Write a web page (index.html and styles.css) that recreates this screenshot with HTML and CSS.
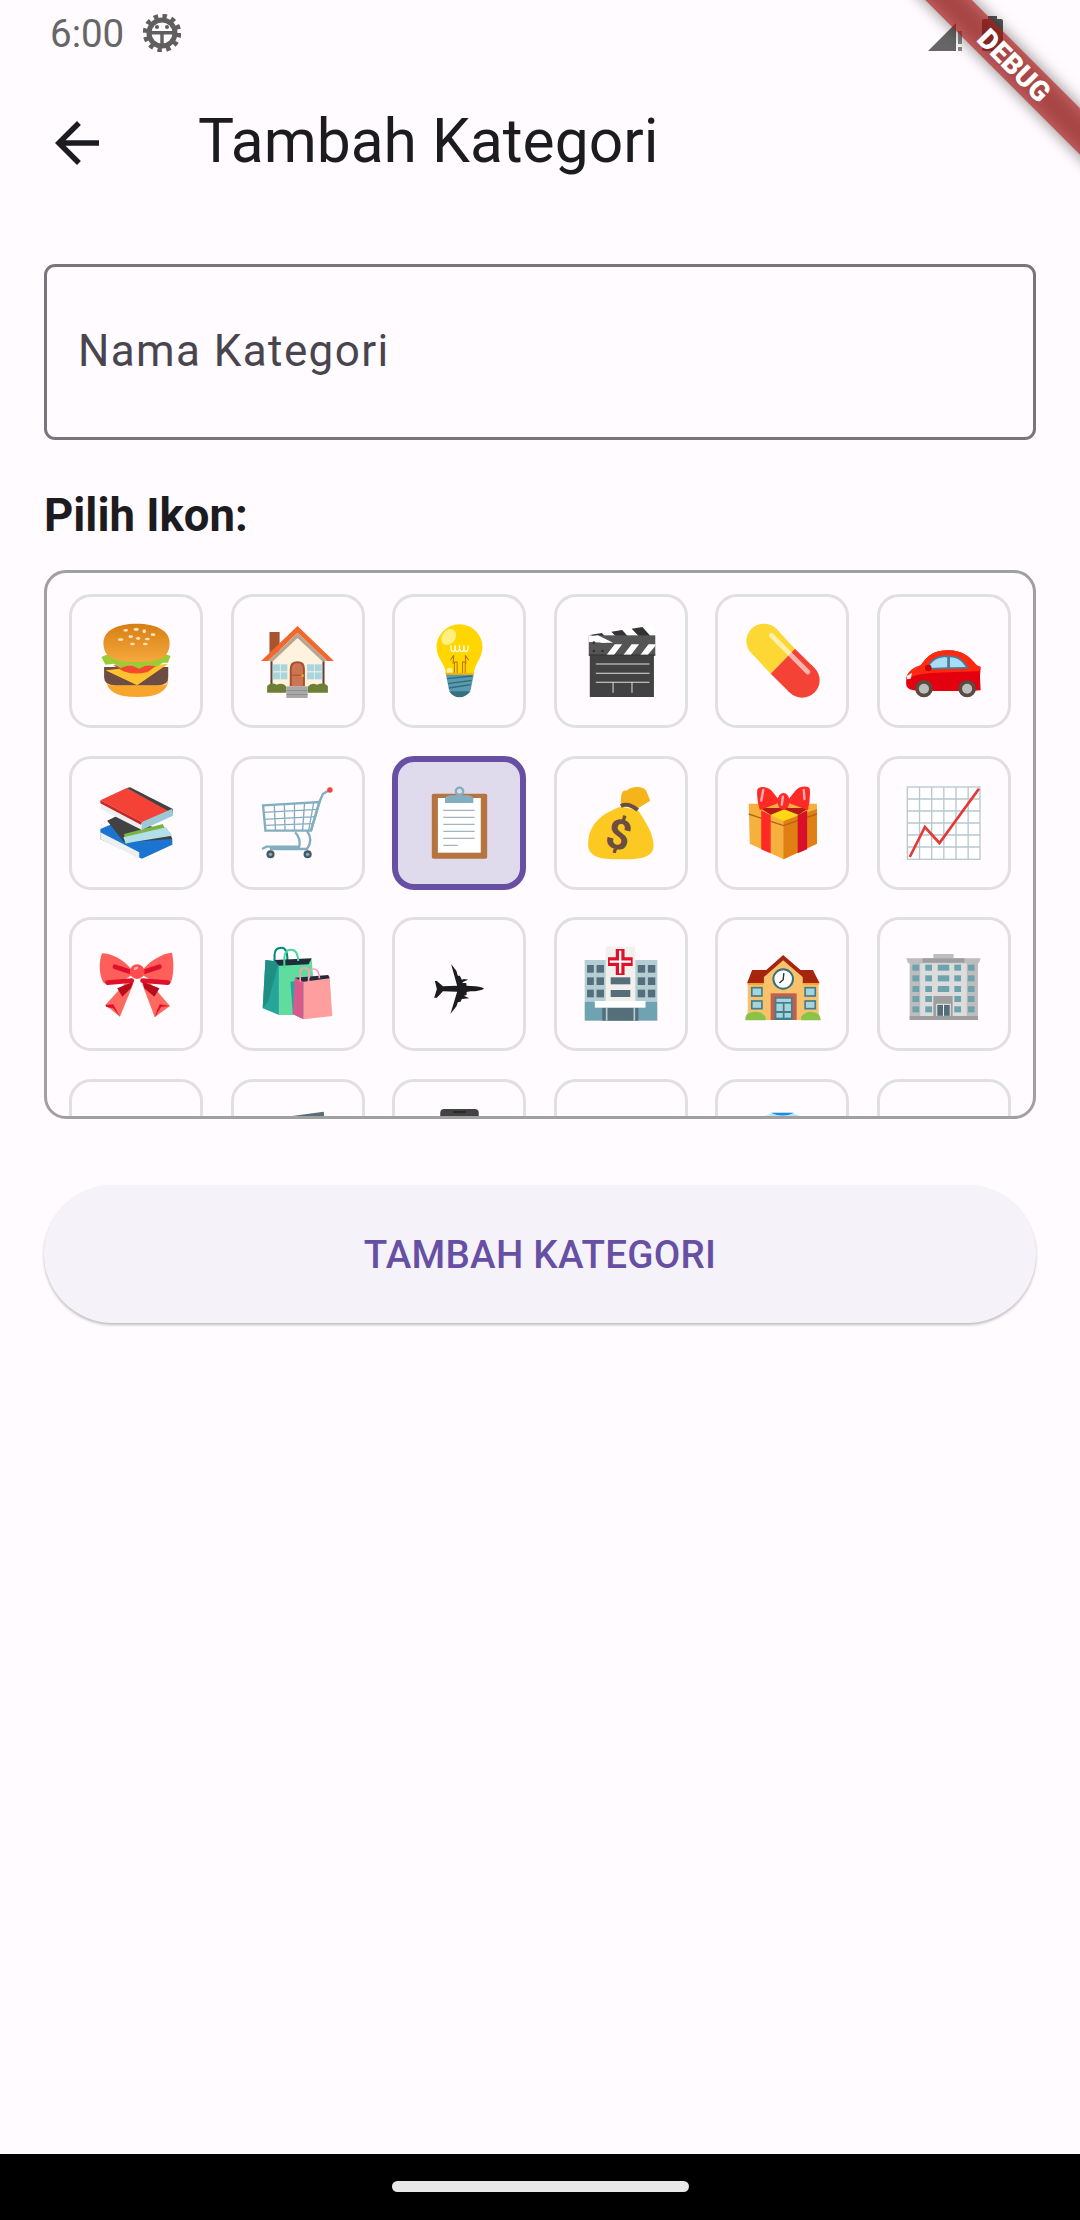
FILE: index.html
```html
<!DOCTYPE html>
<html lang="id">
<head>
<meta charset="UTF-8" />
<title>Tambah Kategori</title>
<link rel="stylesheet" href="styles.css">
</head>
<body>

<div class="statusbar">
	<span class="clock">6:00</span>
	<svg class="gear" viewBox="0 0 38 38">
		<circle cx="19" cy="19" r="17" fill="none" stroke="#5f5f5f" stroke-width="4.500" stroke-dasharray="4.450 4.450"/>
		<circle cx="19" cy="19" r="15.500" fill="#5f5f5f"/>
		<circle cx="19" cy="19" r="10.500" fill="#fffbfe"/>
		<rect x="8" y="17" width="22" height="3.500" fill="#5f5f5f"/>
		<rect x="17.300" y="18" width="3.400" height="13" fill="#5f5f5f"/>
		<circle cx="14" cy="13" r="2" fill="#5f5f5f"/>
		<circle cx="24" cy="13" r="2" fill="#5f5f5f"/>
	</svg>
	<span class="statusgap"></span>
	<svg class="signal" viewBox="0 0 34 35">
		<path d="M0 35 L28 7 V35Z" fill="#666"/>
		<path d="M30 15h4v13h-4zM30 31h4v4h-4z" fill="#888"/>
	</svg>
	<svg class="battery" viewBox="0 0 21 35">
		<path d="M6 3 V0 H15 V3 H19 Q21 3 21 5 V33 Q21 35 19 35 H2 Q0 35 0 33 V5 Q0 3 2 3Z" fill="#555"/>
	</svg>
</div>

<div class="appbar">
	<span class="backbtn">
		<svg viewBox="0 0 24 24" width="66" height="66"><path fill="#1c1b1f" d="M20 11H7.830l5.590-5.590L12 4l-8 8 8 8 1.410-1.410L7.830 13H20v-2z"/></svg>
	</span>
	<h1>Tambah Kategori</h1>
</div>

<div class="content">
	<div class="namefield">Nama Kategori</div>

	<h2>Pilih Ikon:</h2>

	<div class="iconpanel">
		<div class="icongrid">

			<!-- burger -->
			<div class="tile"><svg class="emoji" viewBox="0 0 234 234">
				<defs><linearGradient id="bun" x1="0" y1="0" x2="0" y2="1"><stop offset="0" stop-color="#d67e14"/><stop offset="1" stop-color="#f6a93c"/></linearGradient></defs>
				<path d="M27 170 Q27 225 119 225 Q211 225 211 170Z" fill="#f8a52b"/>
				<rect x="30" y="168" width="178" height="22" rx="10" fill="#ffd08a"/>
				<path d="M21 135 H211 V165 Q211 190 180 190 H55 Q21 190 21 165Z" fill="#6d4c41"/>
				<path d="M25 145 L119 190 L211 125Z" fill="#fdc22e"/>
				<path d="M48 130 H178 L150 150 Q110 160 78 148Z" fill="#f44a2c"/>
				<path d="M13 105 L35 95 H200 L218 102 L210 122 L195 122 L178 134 L150 128 L125 140 L98 128 L70 138 L50 125 L25 128Z" fill="#9ccc35"/>
				<path d="M19 62 C19 25 60 5 117 5 C175 5 215 25 215 62 C215 105 190 120 117 120 C45 120 19 105 19 62Z" fill="url(#bun)"/>
				<g fill="#fbe3bd"><ellipse cx="85" cy="25" rx="7" ry="4"/><ellipse cx="116" cy="22" rx="8" ry="5"/><ellipse cx="140" cy="28" rx="5" ry="6"/><ellipse cx="166" cy="38" rx="7" ry="4"/><ellipse cx="70" cy="53" rx="8" ry="4"/><ellipse cx="100" cy="44" rx="7" ry="4"/><ellipse cx="122" cy="49" rx="6" ry="5"/><ellipse cx="149" cy="51" rx="7" ry="4"/><ellipse cx="105" cy="66" rx="7" ry="4"/><ellipse cx="143" cy="66" rx="7" ry="4"/></g>
			</svg></div>

			<!-- rumah -->
			<div class="tile"><svg class="emoji" viewBox="0 0 234 234">
				<rect x="34" y="30" width="30" height="65" fill="#a9532f"/>
				<path d="M37 112 L117 40 L197 112 V200 H37Z" fill="#fff3e0"/>
				<path d="M37 118 H43 V200 H37ZM191 118 H197 V200 H191Z" fill="#5d4037"/>
				<path d="M9 117 L117 12 L225 117 H205 L117 32 L30 117Z" fill="#f4672c"/>
				<path d="M30 117 L117 32 L205 117 H190 L117 48 L45 117Z" fill="#b8a68e"/>
				<g fill="#a8d5de"><rect x="44" y="127" width="21" height="21"/><rect x="67" y="127" width="20" height="21"/><rect x="44" y="151" width="21" height="21"/><rect x="67" y="151" width="20" height="21"/><rect x="145" y="127" width="21" height="21"/><rect x="168" y="127" width="21" height="21"/><rect x="145" y="151" width="21" height="21"/><rect x="168" y="151" width="21" height="21"/></g>
				<path d="M94 193 V140 Q94 118 117 118 Q139 118 139 140 V193Z" fill="#a6502e"/>
				<path d="M100 193 V141 Q100 124 117 124 Q133 124 133 141 V193Z" fill="#cc7552"/>
				<rect x="100" y="158" width="33" height="3" fill="#a6502e"/>
				<circle cx="132" cy="161" r="4" fill="#f9a825"/>
				<path d="M27 212 V192 Q40 180 55 188 Q75 180 84 195 V212Z M147 212 V195 Q158 180 175 188 Q195 180 207 192 V212Z" fill="#6d7f35"/>
				<rect x="84" y="193" width="63" height="35" fill="#a8a8a8"/>
				<path d="M84 204h63v3H84zM84 216h63v3H84z" fill="#8e8e8e"/>
			</svg></div>

			<!-- lampu -->
			<div class="tile"><svg class="emoji" viewBox="0 0 234 234">
				<path d="M49 75 A68 68 0 0 1 185 75 C185 110 160 125 159 158 H77 C76 125 49 110 49 75Z" fill="#ffd600"/>
				<ellipse cx="85" cy="45" rx="20" ry="26" transform="rotate(35 85 45)" fill="#ffee80"/>
				<circle cx="88" cy="146" r="9" fill="#fff3a0"/>
				<path d="M98 125 L100 100 M100 100 L90 115 M136 125 L134 100 M134 100 L144 115 M102 155 V120 H110 V155 M126 155 V120 H134 V155" fill="none" stroke="#b8730a" stroke-width="3"/>
				<path d="M92 70 C88 95 108 95 104 70 C100 95 120 95 117 70 C114 95 134 95 130 70 C126 95 146 95 142 70" fill="none" stroke="#fff" stroke-width="3.500"/>
				<path d="M75 152 H160 L156 165 H80Z" fill="#ffb300"/>
				<path d="M77 158 H159 L150 205 Q117 235 86 205Z" fill="#5a9ab0"/>
				<path d="M80 170 L155 162 M83 185 L153 175 M86 198 L150 188" stroke="#2f6a7c" stroke-width="4"/>
				<path d="M86 208 H150 Q135 226 117 226 Q98 226 86 208Z" fill="#37707f"/>
			</svg></div>

			<!-- clapper -->
			<div class="tile"><svg class="emoji" viewBox="0 0 234 234">
				<path d="M18 40 L213 10 L218 42 L22 72Z" fill="#fff"/>
				<path d="M30 38 L62 33 L85 60 L55 65Z M90 29 L122 24 L145 50 L114 55Z M150 20 L182 15 L205 41 L174 46Z" fill="#333"/>
				<rect x="23" y="40" width="197" height="60" fill="#555"/>
				<path d="M23 40 L60 48 L75 62 L23 60Z" fill="#fff"/>
				<path d="M50 40 L95 62 H60 L30 42Z" fill="#fff"/>
				<path d="M75 100 L100 67 H122 L97 100ZM125 100 L150 67 H172 L147 100ZM175 100 L200 67 H220 V72 L197 100Z" fill="#fff"/>
				<g fill="#333"><circle cx="38" cy="62" r="4"/><circle cx="38" cy="87" r="4"/><circle cx="64" cy="87" r="4"/></g>
				<rect x="26" y="100" width="190" height="125" fill="#424242"/>
				<rect x="23" y="98" width="197" height="3" fill="#222"/>
				<path d="M44 126 H203 M44 154 H203 M44 181 H203 M95 181 V212 M151 181 V212" stroke="#ddd" stroke-width="3" fill="none"/>
			</svg></div>

			<!-- pil -->
			<div class="tile"><svg class="emoji" viewBox="0 0 234 234">
				<circle cx="62" cy="57" r="52" fill="#fdd835"/>
				<path d="M99.500 21 L24.500 93 L82 155 L154 80Z" fill="#fdd835"/>
				<circle cx="175" cy="175" r="52" fill="#f44336"/>
				<path d="M154 80 L82 155 L137.500 211 L212.500 139Z" fill="#f44336"/>
				<path d="M84 40 L192 150" stroke="#fff" stroke-width="14" stroke-linecap="round" opacity=".6"/>
			</svg></div>

			<!-- mobil -->
			<div class="tile"><svg class="emoji" viewBox="0 0 234 234">
				<path d="M7 190 C5 160 12 145 50 130 C70 100 90 85 130 85 C175 85 195 105 215 130 L227 135 L225 165 L227 205 L200 207 H45 Q7 205 7 190Z" fill="#e3000f"/>
				<path d="M7 165 C15 145 30 135 50 130 C70 100 90 85 130 85 C175 85 195 105 215 130 L227 135 L222 148 Q120 150 60 155 Q25 160 7 172Z" fill="#ff2a10"/>
				<path d="M62 143 C78 112 95 100 132 100 C160 100 180 115 192 140 Q130 140 62 143Z" fill="#4f7a92"/>
				<path d="M72 138 C85 113 100 106 128 106 V136ZM136 106 C158 106 172 118 183 135 L136 136Z" fill="#a6ddf8"/>
				<circle cx="72" cy="138" r="10" fill="#c8000c"/>
				<path d="M8 162 L24 152 L20 170 L9 172Z" fill="#eee"/>
				<circle cx="59" cy="200" r="26" fill="#5a4a42"/><circle cx="59" cy="200" r="15" fill="#bdbdbd"/>
				<circle cx="187" cy="200" r="26" fill="#5a4a42"/><circle cx="187" cy="200" r="15" fill="#bdbdbd"/>
			</svg></div>

			<!-- buku -->
			<div class="tile"><svg class="emoji" viewBox="0 0 234 234">
				<path d="M10 135 L45 120 L223 165 L223 182 L133 224 L10 165Z" fill="#1b75d0"/>
				<path d="M10 145 L125 205 L125 224 L10 165Z" fill="#eceff1"/>
				<path d="M30 110 L60 95 L215 145 L223 165 L80 175Z" fill="#424242"/>
				<path d="M80 150 L195 120 L205 140 L85 180Z" fill="#7cb342"/>
				<path d="M78 160 L205 130 L222 155 L85 178Z" fill="#b2e0ea"/>
				<path d="M10 49 L88 12 L223 84 L133 129Z" fill="#f44336"/>
				<path d="M88 12 L98 10 L225 75 L223 92 L210 80 L120 30Z" fill="#424242"/>
				<path d="M10 49 L133 114 L133 138 L10 75Z" fill="#eceff1"/>
				<path d="M133 114 L223 74 L225 95 L133 138Z" fill="#9cc9d8"/>
				<path d="M10 49 L133 114 L130 122 L10 58Z" fill="#c62828"/>
			</svg></div>

			<!-- keranjang -->
			<div class="tile"><svg class="emoji" viewBox="0 0 234 234">
				<g fill="none" stroke="#82aec0">
					<path d="M15 64 L182 54 L157 140 H22Z" stroke-width="7" fill="#fffbfe"/>
					<path d="M15 85 L176 76 M17 106 L170 98 M20 124 L164 119 M48 62 L52 140 M78 60 L80 140 M108 58 L108 140 M138 56 L132 140 M165 55 L150 140" stroke-width="4"/>
					<path d="M157 140 L182 54 L192 30 L208 20" stroke-width="7"/>
					<path d="M110 145 Q128 165 122 188 H25 L12 195 M145 140 Q165 170 145 195 H35" stroke-width="7"/>
				</g>
				<circle cx="213" cy="18" r="8" fill="#f44336"/>
				<circle cx="37" cy="211" r="12" fill="#455a64"/><circle cx="37" cy="211" r="5" fill="#82aec0"/>
				<circle cx="147" cy="211" r="12" fill="#455a64"/><circle cx="147" cy="211" r="5" fill="#82aec0"/>
			</svg></div>

			<!-- clipboard, dipilih -->
			<div class="tile tile-on"><svg class="emoji" viewBox="0 0 234 234">
				<rect x="35" y="29" width="164" height="195" rx="5" fill="#b5743f"/>
				<rect x="53" y="42" width="127" height="164" fill="#fff"/>
				<path d="M69 79 H162 M69 100 H162 M69 121 H162 M69 142 H162 M69 163 H162 M69 184 H112" stroke="#a0b5bd" stroke-width="3.500"/>
				<circle cx="117" cy="22" r="11" fill="none" stroke="#82aec0" stroke-width="7"/>
				<path d="M74 57 V46 Q74 36 90 34 H144 Q158 36 158 46 V57Z" fill="#82aec0"/>
			</svg></div>

			<!-- kantong uang -->
			<div class="tile"><svg class="emoji" viewBox="0 0 234 234">
				<path d="M118 64 C118 40 118 15 135 20 C150 5 190 5 195 25 L205 50 L170 72Z" fill="#f4b41a"/>
				<path d="M118 68 C70 85 21 115 21 180 C21 225 70 226 120 226 C175 226 215 220 215 185 C215 150 190 110 168 78Z" fill="#fcc923"/>
				<path d="M118 66 Q140 55 168 78" fill="none" stroke="#6d4c41" stroke-width="12"/>
				<text class="bagsign" x="110" y="195" transform="rotate(15 110 160)">$</text>
			</svg></div>

			<!-- kado -->
			<div class="tile"><svg class="emoji" viewBox="0 0 234 234">
				<path d="M17 59 H219 V179 L120 226 L20 179Z" fill="#f5b03e"/>
				<path d="M120 111 L219 75 V179 L120 226Z" fill="#e07f14"/>
				<path d="M17 90 L120 125 L219 90" fill="none" stroke="#b5650f" stroke-width="4"/>
				<path d="M120 76 L82 94 L120 111 L162 94Z" fill="#ffd814"/>
				<path d="M54 79 L82 94 V208 L54 196Z" fill="#ff2a25"/>
				<path d="M162 94 L190 79 V196 L162 208Z" fill="#d9102a"/>
				<path d="M50 72 H195 L165 92 L122 76 L82 92Z" fill="#b71818"/>
				<path d="M42 20 C42 5 70 5 85 20 L112 55 L50 78 Q40 50 42 20Z M198 16 C198 3 165 5 155 20 L128 55 L192 78 Q200 50 198 16Z" fill="#ff2a25"/>
				<ellipse cx="120" cy="52" rx="18" ry="25" fill="#ff2a25"/>
				<path d="M60 18 L54 50M180 18 L182 45M118 38 L115 62" stroke="#ffb0b0" stroke-width="7" stroke-linecap="round"/>
			</svg></div>

			<!-- grafik -->
			<div class="tile"><svg class="emoji" viewBox="0 0 234 234">
				<rect x="10" y="9" width="215" height="217" fill="#fff" stroke="#b8c8ce" stroke-width="4"/>
				<path d="M46 9 V226 M82 9 V226 M118 9 V226 M154 9 V226 M190 9 V226 M10 45 H225 M10 81 H225 M10 117 H225 M10 153 H225 M10 189 H225" stroke="#b8c8ce" stroke-width="4" fill="none"/>
				<path d="M17 219 L62 129 L105 177 L222 14" fill="none" stroke="#e53935" stroke-width="8"/>
			</svg></div>

			<!-- pita -->
			<div class="tile"><svg class="emoji" viewBox="0 0 234 234">
				<path d="M83 115 L25 180 L68 215 L108 115Z" fill="#ff6a60"/>
				<path d="M133 115 L171 217 L216 183 L158 115Z" fill="#ff6a60"/>
				<path d="M25 180 L48 178 L68 215 L60 205 L48 190 L28 186Z M216 183 L190 186 L171 217 L178 195 L186 178Z" fill="#e0102a"/>
				<path d="M60 130 L108 110 L100 130 L75 155Z M135 110 L185 130 L170 155 L140 130Z" fill="#b80c1c"/>
				<path d="M103 75 C80 45 45 25 15 25 C5 50 5 90 20 115 C50 115 85 105 103 90Z" fill="#ff5f5a"/>
				<path d="M135 75 C158 45 195 25 222 23 C228 50 228 90 218 115 C188 115 155 105 135 90Z" fill="#ff5f5a"/>
				<path d="M53 65 L98 80 M31 113 L103 107 M185 65 L140 80 M210 113 L135 107" stroke="#e0102a" stroke-width="14" stroke-linecap="round"/>
				<circle cx="119" cy="80" r="22" fill="#ff4d4d"/>
				<ellipse cx="115" cy="70" rx="7" ry="4" fill="#ffb0b0" transform="rotate(-30 115 70)"/>
			</svg></div>

			<!-- tas belanja -->
			<div class="tile"><svg class="emoji" viewBox="0 0 234 234">
				<path d="M49 60 V30 Q49 8 70 8 Q88 8 87 48" fill="none" stroke="#00897b" stroke-width="6"/>
				<path d="M22 45 L62 50 V210 L14 190Z" fill="#26a69a"/>
				<path d="M22 45 L62 50 L30 170 L14 190Z" fill="#1f8f84"/>
				<path d="M62 50 L159 43 L172 210 H62Z" fill="#5fdc9e"/>
				<path d="M49 45 L159 40 L150 58 L62 62Z" fill="#1f2d3a"/>
				<path d="M78 70 V40 Q78 14 98 14 Q118 14 119 48" fill="none" stroke="#4cd79a" stroke-width="6"/>
				<path d="M96 110 L135 105 L135 223 L103 207Z" fill="#26a69a"/>
				<path d="M109 100 L135 105 V223 L103 207Z" fill="#d85a8c"/>
				<path d="M135 105 L212 93 L220 213 L135 223Z" fill="#ff9e9e"/>
				<path d="M109 98 L208 90 L212 100 L135 110Z" fill="#1f2d3a"/>
				<path d="M125 110 V85 Q125 68 140 68 Q152 68 152 98 M150 115 V90 Q150 72 166 72 Q180 72 182 100" fill="none" stroke="#ff9eb0" stroke-width="5"/>
			</svg></div>

			<!-- pesawat -->
			<div class="tile"><svg class="emoji" viewBox="0 0 234 234">
				<path fill="#1c1b1f" d="M190 131 Q180 124 150 123 L138 122 L137 114 L128 114 L125 112 L143 104 L130 102 L124 104 L118 92 L112 92 L108 78 L92 57 L110 122 L68 124 L50 108 L44 108 L50 132 L42 158 L50 158 L68 139 L110 140 L90 207 L108 184 L112 172 L120 170 L124 162 L146 160 L130 152 L138 150 L138 141 L150 139 Q180 138 190 131Z"/>
			</svg></div>

			<!-- rumah sakit -->
			<div class="tile"><svg class="emoji" viewBox="0 0 234 234">
				<rect x="11" y="45" width="215" height="125" fill="#b5cdd5"/>
				<rect x="73" y="5" width="88" height="165" fill="#f2f0ec"/>
				<path d="M116 12 V90 M80 50 H153" stroke="#e0102a" stroke-width="26"/>
				<path d="M116 17 V85 M85 50 H148" stroke="#fff" stroke-width="7"/>
				<g fill="#546e7a">
					<rect x="18" y="60" width="20" height="23"/><rect x="46" y="60" width="22" height="23"/><rect x="18" y="97" width="20" height="23"/><rect x="46" y="97" width="22" height="23"/><rect x="18" y="134" width="20" height="23"/><rect x="46" y="134" width="22" height="23"/>
					<rect x="168" y="60" width="22" height="23"/><rect x="198" y="60" width="22" height="23"/><rect x="168" y="97" width="22" height="23"/><rect x="198" y="97" width="22" height="23"/><rect x="168" y="134" width="22" height="23"/><rect x="198" y="134" width="22" height="23"/>
					<rect x="88" y="97" width="58" height="21"/><rect x="88" y="135" width="58" height="21"/>
				</g>
				<rect x="11" y="170" width="215" height="57" fill="#6fa3b2"/>
				<rect x="63" y="188" width="107" height="39" fill="#546e7a"/>
				<path d="M76 188 V227 M158 188 V227" stroke="#b5cdd5" stroke-width="5"/>
				<rect x="41" y="168" width="150" height="20" fill="#fff"/>
			</svg></div>

			<!-- sekolah -->
			<div class="tile"><svg class="emoji" viewBox="0 0 234 234">
				<rect x="14" y="112" width="210" height="113" fill="#f8c16a"/>
				<path d="M27 75 H207 L227 115 H12Z" fill="#a5250f"/>
				<path d="M62 85 L119 38 L177 85 V150 H62Z" fill="#f8c16a"/>
				<path d="M54 88 L119 30 L185 88 L177 96 L119 46 L62 96Z" fill="#a5250f"/>
				<path d="M14 115 H60 V120 H14ZM179 115 H224 V120 H179Z" fill="#f9a825"/>
				<circle cx="119" cy="102" r="29" fill="#fff" stroke="#37707f" stroke-width="6"/>
				<path d="M121 84 L119 104 L108 114" fill="none" stroke="#263238" stroke-width="4"/>
				<rect x="82" y="145" width="77" height="80" fill="#c05f4f"/>
				<rect x="94" y="156" width="53" height="69" fill="#3f7f8c"/>
				<g fill="#a6d3dc"><rect x="99" y="161" width="43" height="10"/><rect x="99" y="176" width="19" height="22"/><rect x="123" y="176" width="19" height="22"/><rect x="99" y="204" width="19" height="14"/><rect x="123" y="204" width="19" height="14"/></g>
				<g fill="#a6d3dc" stroke="#3f7f8c" stroke-width="5"><rect x="26" y="128" width="30" height="25"/><rect x="26" y="168" width="30" height="23"/><rect x="184" y="128" width="30" height="25"/><rect x="184" y="168" width="30" height="23"/></g>
				<path d="M7 226 Q5 205 25 202 Q50 195 67 215 V226ZM172 226 V215 Q190 195 210 202 Q230 205 230 226Z" fill="#8bc34a"/>
			</svg></div>

			<!-- gedung -->
			<div class="tile"><svg class="emoji" viewBox="0 0 234 234">
				<rect x="87" y="27" width="60" height="15" fill="#bdbdbd"/>
				<rect x="17" y="50" width="202" height="175" fill="#dcdcdc"/>
				<path d="M17 50 H48 V225 H17ZM186 50 H219 V225 H186Z" fill="#bdbdbd"/>
				<path d="M7 40 H227 L222 55 H12Z" fill="#bdbdbd"/>
				<rect x="55" y="40" width="124" height="13" fill="#9e9e9e"/>
				<g fill="#6fa3ac">
					<rect x="25" y="59" width="20" height="18"/><rect x="63" y="59" width="20" height="18"/><rect x="100" y="59" width="34" height="18"/><rect x="149" y="59" width="20" height="18"/><rect x="189" y="59" width="20" height="18"/>
					<rect x="25" y="91" width="20" height="18"/><rect x="63" y="91" width="20" height="18"/><rect x="100" y="91" width="34" height="18"/><rect x="149" y="91" width="20" height="18"/><rect x="189" y="91" width="20" height="18"/>
					<rect x="25" y="123" width="20" height="18"/><rect x="63" y="123" width="20" height="18"/><rect x="100" y="123" width="34" height="18"/><rect x="149" y="123" width="20" height="18"/><rect x="189" y="123" width="20" height="18"/>
					<rect x="25" y="153" width="20" height="18"/><rect x="63" y="153" width="20" height="18"/><rect x="149" y="153" width="20" height="18"/><rect x="189" y="153" width="20" height="18"/>
					<rect x="25" y="184" width="20" height="18"/><rect x="63" y="184" width="20" height="18"/><rect x="149" y="184" width="20" height="18"/><rect x="189" y="184" width="20" height="18"/>
				</g>
				<rect x="87" y="153" width="57" height="60" fill="#9e9e9e"/>
				<rect x="97" y="178" width="40" height="36" fill="#546e7a" stroke="#eee" stroke-width="3"/>
				<path d="M117 178 V214" stroke="#eee" stroke-width="3"/>
				<rect x="17" y="213" width="202" height="12" fill="#9e9e9e"/>
			</svg></div>

			<!-- baris keempat, terpotong -->
			<div class="tile"></div>
			<div class="tile"><svg class="emoji" viewBox="0 0 234 234">
				<path d="M87 29 L195 14 L197 60 L87 60Z" fill="#546e7a"/>
			</svg></div>
			<div class="tile"><svg class="emoji" viewBox="0 0 234 234">
				<rect x="60" y="6" width="114" height="220" rx="12" fill="#424242"/>
				<rect x="98" y="13" width="38" height="4" rx="2" fill="#222"/>
			</svg></div>
			<div class="tile"></div>
			<div class="tile"><svg class="emoji" viewBox="0 0 234 234">
				<path d="M57 30 L92 17 H142 L177 30 V60 H57Z" fill="#b3e5fc"/>
				<path d="M82 17 H152 Q117 34 82 17Z" fill="#1e88e5"/>
			</svg></div>
			<div class="tile"></div>

		</div>
	</div>

	<button class="addbtn">TAMBAH KATEGORI</button>
</div>

<div class="navbar"><span class="handle"></span></div>

<div class="bannerclip">
	<div class="banner"><span>DEBUG</span></div>
</div>

</body>
</html>
```

FILE: styles.css
```css
* {
	margin: 0;
	padding: 0;
	box-sizing: border-box;
}

body {
	width: 1080px;
	height: 2220px;
	display: flex;
	flex-direction: column;
	position: relative;
	background-color: #fffbfe;
	font-family: Roboto, sans-serif;
	color: #1c1b1f;
}

.statusbar {
	height: 66px;
	display: flex;
	align-items: center;
	padding: 0 77px 0 50px;
	flex: none;
}

.clock {
	font-size: 38.5px;
	color: #666;
}

.gear {
	width: 38px;
	height: 38px;
	margin-left: 19px;
}

.statusgap {
	flex: 1;
}

.signal {
	width: 34px;
	height: 35px;
}

.battery {
	width: 21px;
	height: 35px;
	margin-left: 20px;
}

.appbar {
	height: 154px;
	display: flex;
	align-items: center;
	flex: none;
}

.backbtn {
	width: 154px;
	display: flex;
	justify-content: center;
}

h1 {
	margin-left: 44px;
	padding-bottom: 4px;
	font-size: 60.5px;
	font-weight: 400;
}

.content {
	flex: 1;
	padding: 44px 44px 0;
}

.namefield {
	height: 176px;
	display: flex;
	align-items: center;
	padding: 0 31px 2px;
	border: 3px solid #79747e;
	border-radius: 11px;
	font-size: 44px;
	letter-spacing: 1.4px;
	color: #49454f;
}

h2 {
	margin: 44px 0 22px;
	font-size: 45.5px;
	line-height: 64px;
	font-weight: 700;
}

.iconpanel {
	height: 549px;
	overflow: hidden;
	border: 3px solid #a0a0a0;
	border-radius: 22px;
}

.icongrid {
	display: grid;
	grid-template-columns: repeat(6, 1fr);
	gap: 27.5px;
	padding: 21px 22px;
}

.tile {
	height: 134px;
	display: flex;
	align-items: center;
	justify-content: center;
	border: 3px solid #e0e0e0;
	border-radius: 22px;
}

.tile-on {
	border: 6px solid #6750a4;
	background-color: #e0dbec;
}

.emoji {
	width: 79px;
	height: 78px;
	flex: none;
	transform: scaleX(1.013);
}

.bagsign {
	font-family: Roboto, sans-serif;
	font-size: 125px;
	font-weight: 700;
	fill: #6d4c41;
	text-anchor: middle;
}

.addbtn {
	display: block;
	width: 100%;
	height: 138px;
	margin-top: 66px;
	border: none;
	border-radius: 69px;
	background-color: #f5f2f9;
	box-shadow: 0 2px 3px rgba(0, 0, 0, .25);
	font-family: Roboto, sans-serif;
	font-size: 38.5px;
	font-weight: 500;
	letter-spacing: .28px;
	color: #6750a4;
}

.navbar {
	height: 66px;
	flex: none;
	display: flex;
	justify-content: center;
	padding-top: 27px;
	background-color: #000;
}

.handle {
	width: 297px;
	height: 11px;
	border-radius: 6px;
	background-color: #e8e8e8;
}

/* debug ribbon, lies over the status bar */
.bannerclip {
	position: absolute;
	top: 0;
	right: 0;
	width: 240px;
	height: 240px;
	overflow: hidden;
}

.banner {
	position: absolute;
	left: -26px;
	top: 49px;
	width: 400px;
	height: 33px;
	transform: rotate(45deg);
}

.banner::before {
	content: "";
	position: absolute;
	inset: 0;
	background-color: rgba(0, 0, 0, .45);
	filter: blur(8px);
}

.banner span {
	position: absolute;
	inset: 0;
	display: flex;
	align-items: center;
	justify-content: center;
	background-color: rgba(183, 28, 28, .63);
	font-size: 28px;
	line-height: 1;
	font-weight: 900;
	color: #fff;
}
```
